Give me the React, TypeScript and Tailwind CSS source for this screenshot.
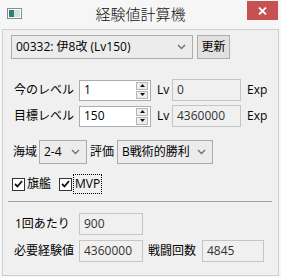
import React from 'react';

const font = "font-['Open_Sans','Noto_Sans_CJK_JP',sans-serif]";

function Chevron() {
  return (
    <svg width="9" height="6" viewBox="0 0 9 6" className="shrink-0">
      <polyline points="1,1 4.5,4.5 8,1" fill="none" stroke="#707070" strokeWidth="1.4" />
    </svg>
  );
}

function Combo({ value, w, textPad = 4 }: { value: string; w: string; textPad?: number }) {
  return (
    <div
      className={`${w} h-[24px] flex items-center justify-between border border-[#acacac] bg-[#ececec] pr-[6px] text-[12px] leading-none text-black`}
      style={{ paddingLeft: textPad }}
    >
      <span className="whitespace-nowrap">{value}</span>
      <Chevron />
    </div>
  );
}

function Spinner() {
  return (
    <div className="flex h-full flex-col justify-center gap-[1px] py-[1px]">
      {['up', 'down'].map((d) => (
        <div
          key={d}
          className="flex h-[8px] w-[12px] items-center justify-center border border-[#b5b5b5] bg-[#eeeeee]"
        >
          <svg width="5" height="3" viewBox="0 0 5 3">
            {d === 'up' ? <polygon points="0,3 5,3 2.5,0" fill="#111" /> : <polygon points="0,0 5,0 2.5,3" fill="#111" />}
          </svg>
        </div>
      ))}
    </div>
  );
}

function LevelInput({ value }: { value: string }) {
  return (
    <div className="flex h-[21px] w-[72px] items-center justify-between border border-[#abadb3] bg-white pl-[4px] pr-[2px] text-[12px] leading-none text-black">
      <span>{value}</span>
      <Spinner />
    </div>
  );
}

function ReadBox({ value, w }: { value: string; w: string }) {
  return (
    <div
      className={`${w} flex h-[22px] items-center border border-[#c5c5c5] bg-[#f0f0f0] pl-[4px] text-[12px] leading-none text-[#333]`}
    >
      {value}
    </div>
  );
}

function Check() {
  return (
    <div className="flex h-[13px] w-[13px] shrink-0 items-center justify-center border border-[#333] bg-white">
      <svg width="9" height="8" viewBox="0 0 9 8">
        <polyline points="1,4 3.5,6.5 8,1" fill="none" stroke="#111" strokeWidth="1.8" />
      </svg>
    </div>
  );
}

export default function App() {
  return (
    <div className={`flex h-[277px] w-[281px] flex-col bg-[#f6f6f6] ${font}`}>
      {/* title bar */}
      <div className="grid h-[29px] grid-cols-[1fr_auto_1fr] items-start">
        <div className="pl-[7px] pt-[8px]">
          <svg width="15" height="11" viewBox="0 0 15 11">
            <rect x="0.5" y="0.5" width="14" height="10" fill="#fff" stroke="#8a8a8a" />
            <rect x="2" y="2" width="5" height="7" fill="#2f7f73" />
            <rect x="7" y="2" width="6" height="7" fill="#cfe2df" />
          </svg>
        </div>
        <div className="pt-[4px] font-['Noto_Sans_CJK_JP',sans-serif] text-[15px] font-light leading-[20px] text-[#111]">
          経験値計算機
        </div>
        <div className="flex justify-end pr-[3px] pt-[1px]">
          <div className="flex h-[19px] w-[31px] items-center justify-center bg-[#c75050]">
            <svg width="9" height="8" viewBox="0 0 9 8">
              <path d="M1 0.5 L8 7.5 M8 0.5 L1 7.5" stroke="#fff" strokeWidth="1.8" />
            </svg>
          </div>
        </div>
      </div>

      {/* client area */}
      <div className="mx-[2px] mb-[1px] flex flex-1 flex-col border border-[#cfcfcf] bg-[#f0f0f0] pl-[8px] pr-[5px] text-[12px] leading-none text-black">
        <div className="mt-[5px] flex items-center gap-[4px]">
          <Combo value="00332: 伊8改 (Lv150)" w="w-[182px]" />
          <div className="flex h-[24px] w-[33px] items-center justify-center border border-[#adadad] bg-[#e1e1e1]">
            更新
          </div>
        </div>

        <div className="mt-[20px] flex flex-col gap-[4px]">
          {[
            ['今のレベル', '1', '0'],
            ['目標レベル', '150', '4360000'],
          ].map(([label, lv, exp]) => (
            <div key={label} className="flex items-center">
              <span className="w-[68px] pl-[3px]">{label}</span>
              <LevelInput value={lv} />
              <span className="ml-[6px] w-[15px]">Lv</span>
              <ReadBox value={exp} w="w-[69px]" />
              <span className="ml-[6px]">Exp</span>
            </div>
          ))}
        </div>

        <div className="mt-[13px] flex items-center">
          <span className="w-[28px] pl-[2px]">海域</span>
          <Combo value="2-4" w="w-[48px]" />
          <span className="ml-[3px] w-[27px]">評価</span>
          <Combo value="B戦術的勝利" w="w-[96px]" />
        </div>

        <div className="mt-[10px] flex items-center">
          <div className="ml-[1px] flex items-center gap-[2px]">
            <Check />
            <span>旗艦</span>
          </div>
          <div className="ml-[8px] flex items-center gap-[1px]">
            <Check />
            <span className="border border-dotted border-black px-[1px] py-[3px]">MVP</span>
          </div>
        </div>

        <div className="-ml-[3px] mt-[7px] h-[1px] w-[264px] bg-[#a0a0a0]" />

        <div className="mt-[11px] flex flex-col gap-[5px]">
          <div className="flex items-center">
            <span className="w-[68px] pl-[4px]">1回あたり</span>
            <ReadBox value="900" w="w-[64px]" />
          </div>
          <div className="flex items-center">
            <span className="w-[68px] pl-[3px]">必要経験値</span>
            <ReadBox value="4360000" w="w-[64px]" />
            <span className="ml-[5px] w-[54px]">戦闘回数</span>
            <ReadBox value="4845" w="w-[62px]" />
          </div>
        </div>
      </div>
    </div>
  );
}
